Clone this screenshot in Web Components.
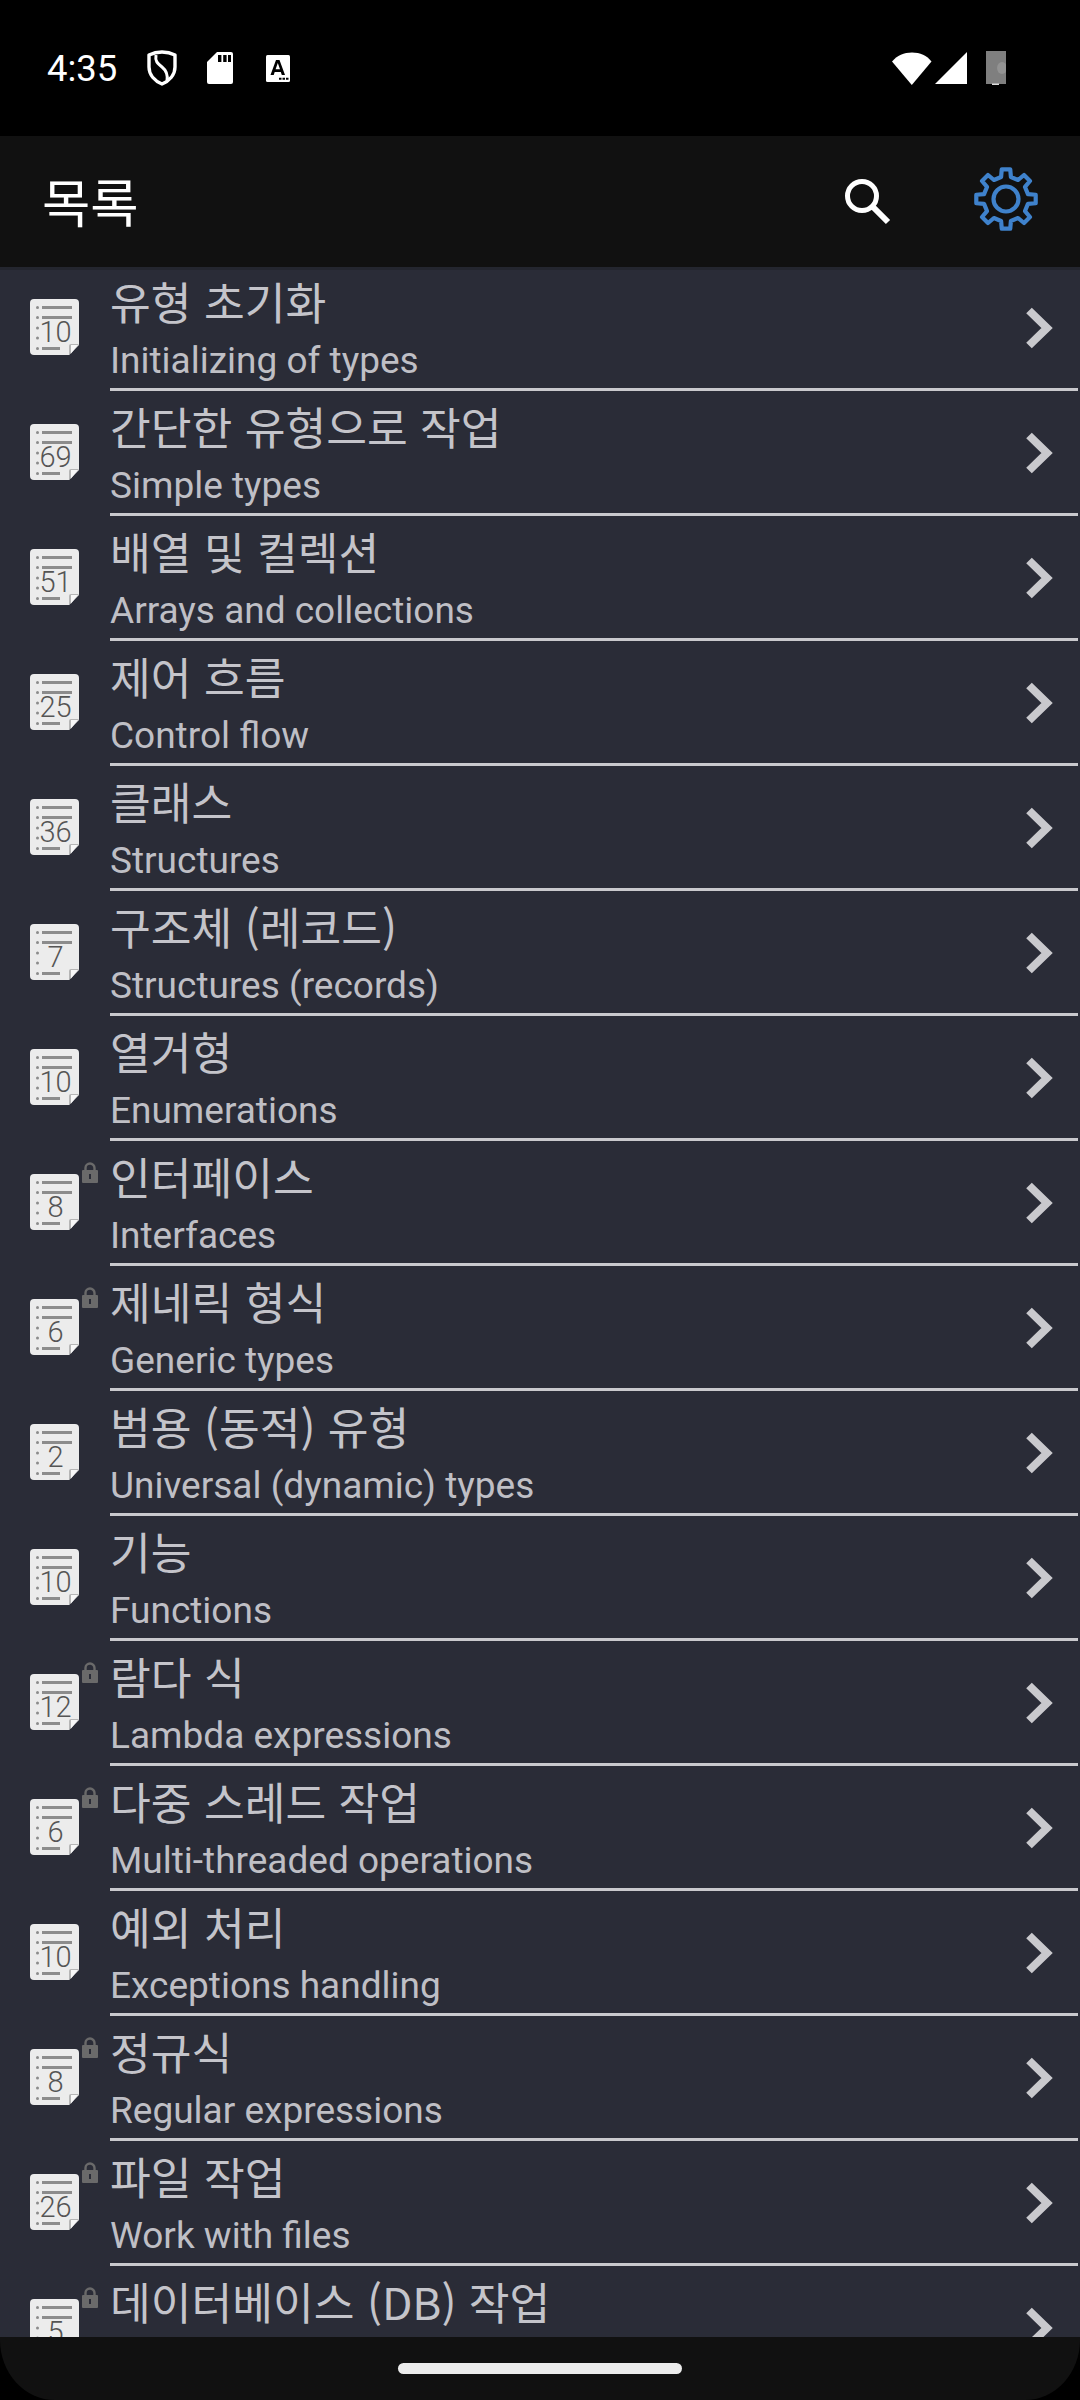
<!DOCTYPE html>
<html lang="ko"><head><meta charset="utf-8">
<style>
html,body{margin:0;padding:0;background:#000}
body{width:1080px;height:2400px;overflow:hidden;display:flex;flex-direction:column;font-family:"Noto Sans CJK KR","Noto Sans",sans-serif}
lesson-list{flex:1 1 auto;min-height:0}
</style></head><body>
<status-bar></status-bar>
<app-bar heading="목록"></app-bar>
<lesson-list>
<lesson-row n="10" t="유형 초기화" s="Initializing of types" class="first"></lesson-row>
<lesson-row n="69" t="간단한 유형으로 작업" s="Simple types"></lesson-row>
<lesson-row n="51" t="배열 및 컬렉션" s="Arrays and collections"></lesson-row>
<lesson-row n="25" t="제어 흐름" s="Control flow"></lesson-row>
<lesson-row n="36" t="클래스" s="Structures"></lesson-row>
<lesson-row n="7" t="구조체 (레코드)" s="Structures (records)"></lesson-row>
<lesson-row n="10" t="열거형" s="Enumerations"></lesson-row>
<lesson-row n="8" t="인터페이스" s="Interfaces" locked></lesson-row>
<lesson-row n="6" t="제네릭 형식" s="Generic types" locked></lesson-row>
<lesson-row n="2" t="범용 (동적) 유형" s="Universal (dynamic) types"></lesson-row>
<lesson-row n="10" t="기능" s="Functions"></lesson-row>
<lesson-row n="12" t="람다 식" s="Lambda expressions" locked></lesson-row>
<lesson-row n="6" t="다중 스레드 작업" s="Multi-threaded operations" locked></lesson-row>
<lesson-row n="10" t="예외 처리" s="Exceptions handling"></lesson-row>
<lesson-row n="8" t="정규식" s="Regular expressions" locked></lesson-row>
<lesson-row n="26" t="파일 작업" s="Work with files" locked></lesson-row>
<lesson-row n="5" t="데이터베이스 (DB) 작업" s="" locked></lesson-row>
</lesson-list>
<nav-bar></nav-bar>
<script>
function def(name, html){
  customElements.define(name, class extends HTMLElement{
    connectedCallback(){
      if(this.shadowRoot) return;
      const r=this.attachShadow({mode:'open'});
      r.innerHTML=typeof html==='function'?html(this):html;
    }
  });
}
def('status-bar',`<style>
:host{display:flex;align-items:center;height:136px;box-sizing:border-box;background:#000;color:#fff;padding:0 74px 0 47px;flex:none}
.t{font:36.5px/1 Roboto,sans-serif;width:100px;position:relative;top:1px}
svg{display:block;flex:none}
.sp{flex:1}
</style>
<span class="t">4:35</span>
<svg width="30" height="36" viewBox="0 0 30 36" style="margin-right:30px"><path d="M15 2C19 2 24 3 28 5V17C28 25 22 31 15 34C8 31 2 25 2 17V5C6 3 11 2 15 2Z" fill="none" stroke="#fff" stroke-width="3.4" stroke-linejoin="round"/><path d="M9 5C8 11 10 13 15 17C20 21 21 25 20 31" fill="none" stroke="#fff" stroke-width="3"/></svg>
<svg width="26" height="32" viewBox="0 0 26 32" style="margin-right:33px"><path d="M10 0H24A2 2 0 0 1 26 2V30A2 2 0 0 1 24 32H2A2 2 0 0 1 0 30V10Z" fill="#fff"/><path d="M11 3h3.4v7H11zM16.2 3h3.4v7h-3.4zM21 3h3v7h-3z" fill="#000"/></svg>
<svg width="24" height="27" viewBox="0 0 24 27"><rect width="24" height="27" rx="1.5" fill="#fff"/><path d="M4.500 20L10 5h3.500L19 20h-3.200l-1-3H8.700l-1 3zM9.600 14.300h4.400L11.800 8z" fill="#000" fill-rule="evenodd"/><path d="M13 22.800h2.500v2H13zM16.500 22.800H19v2h-2.500zM20 22.800h2.500v2H20z" fill="#000"/></svg>
<span class="sp"></span>
<svg width="40" height="33" viewBox="0 0 40 33" style="margin-right:3px"><path d="M0 9.500C5 3.500 12 0.500 20 0.500S35 3.500 39.500 9.500L19.800 33Z" fill="#fff"/></svg>
<svg width="32" height="32" viewBox="0 0 32 32" style="margin-right:19px"><path d="M32 0V32H0Z" fill="#fff"/></svg>
<svg width="20" height="34" viewBox="0 0 20 34"><rect width="20" height="33" fill="#7f7f7f"/><ellipse cx="16" cy="17" rx="5" ry="6" fill="#939393"/><rect x="6" y="32.500" width="7" height="1.500" fill="#ddd"/></svg>`);
def('app-bar',el=>`<style>
:host{display:flex;align-items:center;height:131px;box-sizing:border-box;background:#111;color:#fff;flex:none;padding:0 41px 6px 42px;position:relative;z-index:1}
h1{margin:0;font:400 52.5px/1 "Noto Sans CJK KR",sans-serif;flex:1;position:relative;top:2px}
svg{display:block;flex:none}
</style><h1>${el.getAttribute('heading')}</h1>
<svg width="50" height="50" viewBox="0 0 50 50" style="margin-right:81px;position:relative;top:2px"><circle cx="20" cy="20" r="14.500" fill="none" stroke="#fff" stroke-width="5"/><path d="M30.500 30.500L46 46" stroke="#fff" stroke-width="6"/></svg>
<gear-icon></gear-icon>`);
def('gear-icon',()=>{
  const N=8,ro=30,ri=22.500,c=33;let d='';
  const P=(r,a)=>(c+r*Math.cos(a)).toFixed(2)+' '+(c+r*Math.sin(a)).toFixed(2);
  for(let i=0;i<N;i++){
    const a=i*2*Math.PI/N-Math.PI/2,w=Math.PI/N;
    d+=(i?'L':'M')+P(ri,a-w*.56)+'L'+P(ro,a-w*.36)+'L'+P(ro,a+w*.36)+'L'+P(ri,a+w*.56);
  }
  return `<style>:host{display:block;flex:none;width:66px;height:66px}svg{display:block}</style>
  <svg width="66" height="66" viewBox="0 0 66 66"><path d="${d}Z" fill="none" stroke="#3f82cc" stroke-width="4.200" stroke-linejoin="round"/><circle cx="33" cy="33" r="12.500" fill="none" stroke="#3f82cc" stroke-width="4.200"/></svg>`;
});
def('lesson-list',`<style>
:host{display:block;background:#2a2c37;overflow:hidden;border-top:3px solid #24262f;box-sizing:border-box}
.w{margin-top:-4px}
</style><div class="w"><slot></slot></div>`);
def('note-icon',el=>`<style>
:host{display:block;width:51px;height:58px;position:relative;flex:none}
svg{display:block}
span{position:absolute;left:0;right:0;top:20px;text-align:center;font:300 29px/29px Roboto,sans-serif;color:#555;padding-left:2px}
</style><svg width="51" height="58" viewBox="0 0 51 58">
<path d="M5 1H46A4 4 0 0 1 50 5V47L40 57H5A4 4 0 0 1 1 53V5A4 4 0 0 1 5 1Z" fill="#ececec"/>
<path d="M50 46H42A2 2 0 0 0 40 48V57Z" fill="#b5b5b5"/><path d="M49 47H42V55.500Z" fill="#f8f8f8"/>
<g fill="#8c8c8c"><rect x="13" y="8" width="30" height="3"/><rect x="13" y="18" width="30" height="3"/><rect x="13" y="49" width="18" height="3"/>
<circle cx="8.500" cy="9.500" r="1.500"/><circle cx="8.500" cy="19.500" r="1.500"/><circle cx="8.500" cy="30" r="1.500"/><circle cx="8.500" cy="40" r="1.500"/><circle cx="8.500" cy="50.500" r="1.500"/></g></svg>
<span>${el.getAttribute('n')}</span>`);
def('lesson-row',el=>{
  const locked=el.hasAttribute('locked');
  return `<style>
:host{display:grid;grid-template-columns:110px 1fr;height:125px;box-sizing:border-box;color:#c4c4ca}
.ic{display:flex;align-items:center;justify-content:flex-start;padding:0 0 3px 29px;position:relative}
.lock{position:absolute;left:82px;top:21px}
.body{display:flex;align-items:center;border-bottom:3px solid #c9c9cd;margin-right:2px;min-width:0;overflow:hidden;position:relative}
.tx{flex:1;min-width:0;align-self:stretch;display:flex;flex-direction:column}
.t{font:400 44.3px/62px "Noto Sans CJK KR",sans-serif;height:62px;margin-top:4px;white-space:nowrap}
.s{font:400 37px/46px Roboto,sans-serif;height:46px;margin-top:6px;white-space:nowrap;color:#bfbfc5}
svg{display:block;flex:none}
.ch{margin-right:25px;position:relative;top:1px}
</style>
<div class="ic"><note-icon n="${el.getAttribute('n')}"></note-icon>${locked?`<svg class="lock" width="16" height="21" viewBox="0 0 16 21"><path d="M3.500 9V6a4.500 4.500 0 0 1 9 0v3" fill="none" stroke="#6a6a6a" stroke-width="2.400"/><rect y="8" width="16" height="13" rx="1" fill="#6a6a6a"/><rect x="7" y="12" width="2" height="5" fill="#2a2c37"/></svg>`:''}</div>
<div class="body"><div class="tx"><div class="t">${el.getAttribute('t')}</div><div class="s">${el.getAttribute('s')}</div></div>
<svg class="ch" width="28" height="44" viewBox="0 0 28 44"><path d="M4 4.500L22 22L4 39.500" fill="none" stroke="#c9c9cd" stroke-width="8"/></svg></div>`;
});
def('nav-bar',`<style>
:host{display:block;height:63px;background:#000;flex:none;position:relative;z-index:1}
.b{height:100%;background:#111;border-radius:0 0 55px 55px/0 0 60px 60px;display:flex;justify-content:center;padding-top:26px;box-sizing:border-box}
.p{width:284px;height:11px;border-radius:6px;background:#ececec}
</style><div class="b"><div class="p"></div></div>`);
</script>
</body></html>
